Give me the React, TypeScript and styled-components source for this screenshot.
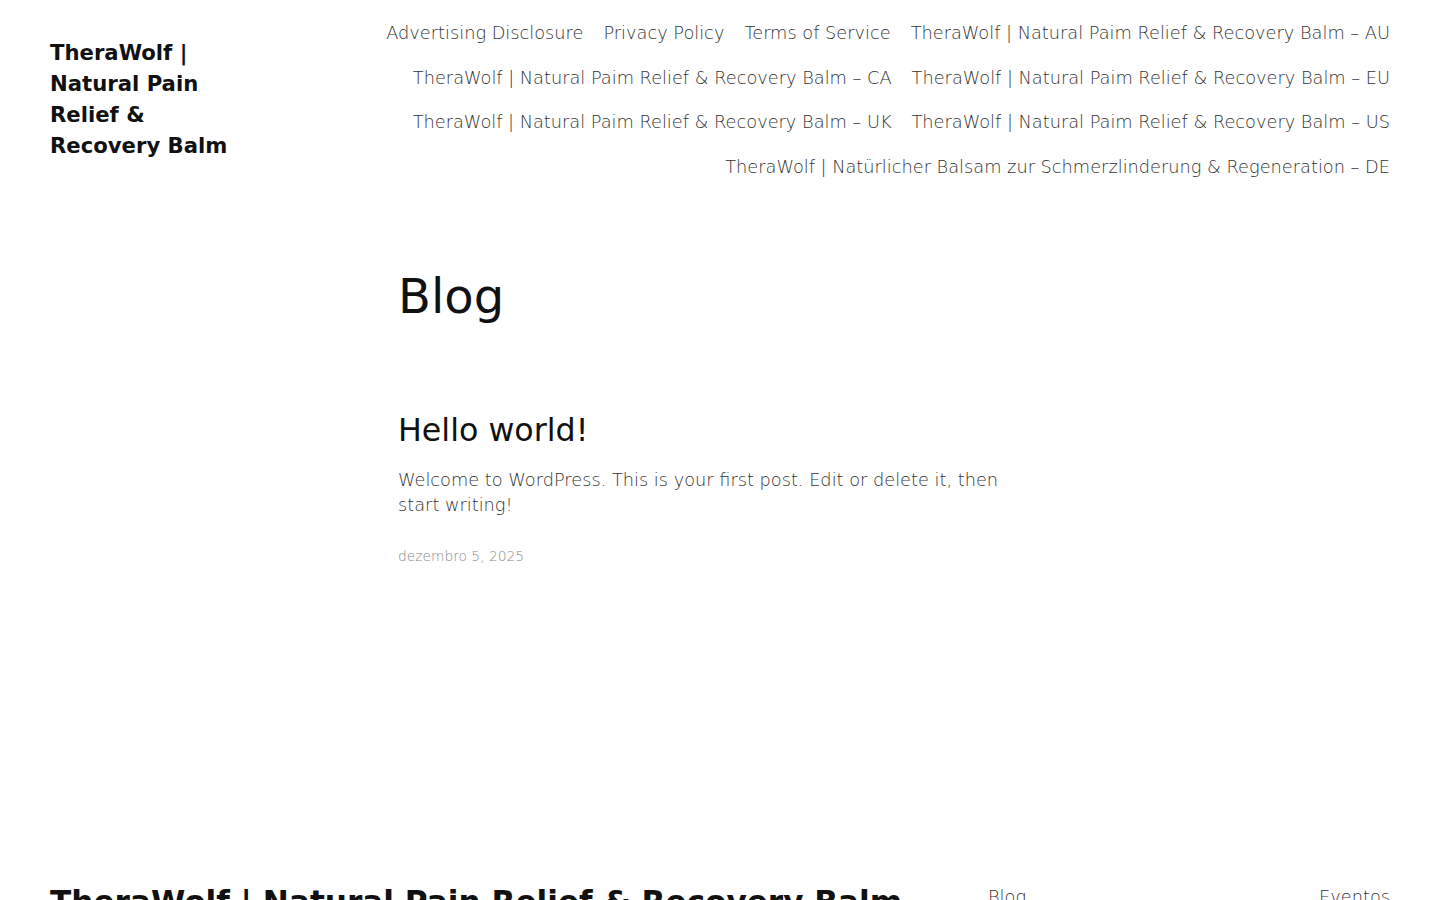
import React from "react";
import styled, { createGlobalStyle } from "styled-components";

const Global = createGlobalStyle`
  html, body { margin: 0; padding: 0; background: #fff; }
  body { font-family: "DejaVu Sans", sans-serif; color: #111; }
  a { text-decoration: none; color: inherit; }
`;

const Page = styled.div`
  min-height: 900px;
  display: flex;
  flex-direction: column;
`;

const Header = styled.header`
  display: flex;
  justify-content: space-between;
  align-items: flex-start;
  padding: 11px 50px 0 50px;
`;

const SiteTitle = styled.h1`
  margin: 26px 0 0 0;
  width: 200px;
  font-size: 21.2px;
  font-weight: 700;
  line-height: 31px;
  color: #111;
`;

const Nav = styled.nav`
  display: flex;
  flex-wrap: wrap;
  justify-content: flex-end;
  column-gap: 20px;
  max-width: 1010px;
`;

const NavLink = styled.a`
  font-size: 17.75px;
  font-weight: 300;
  line-height: 44.5px;
  color: #333;
  white-space: nowrap;
`;

const Main = styled.main`
  padding: 75px 0 0 398px;
  max-width: 620px;
`;

const PageTitle = styled.h2`
  margin: 0;
  font-size: 48px;
  font-weight: 400;
  line-height: 64px;
  color: #111;
`;

const Post = styled.article`
  margin-top: 82px;
`;

const PostTitle = styled.h3`
  margin: 0;
  font-size: 31.7px;
  font-weight: 400;
  line-height: 40px;
  color: #111;
`;

const Excerpt = styled.p`
  margin: 18px 0 0 0;
  font-size: 17.75px;
  font-weight: 300;
  line-height: 25px;
  color: #333;
`;

const PostDate = styled.time`
  display: block;
  margin-top: 30px;
  font-size: 13.8px;
  font-weight: 300;
  color: #8a8a8a;
`;

const Footer = styled.footer`
  margin-top: auto;
  display: flex;
  align-items: flex-start;
  padding: 0 50px;
  height: 16px;
  overflow: hidden;
`;

const FooterTitle = styled.div`
  font-size: 31.15px;
  font-weight: 700;
  color: #111;
  line-height: 36px;
  flex: 1;
`;

const FooterNav = styled.div`
  display: flex;
  justify-content: space-between;
  width: 402px;
  font-size: 17.75px;
  font-weight: 300;
  line-height: 25px;
  color: #333;
  margin-top: 1px;
`;

const navItems = [
  "Advertising Disclosure",
  "Privacy Policy",
  "Terms of Service",
  "TheraWolf | Natural Paim Relief & Recovery Balm – AU",
  "TheraWolf | Natural Paim Relief & Recovery Balm – CA",
  "TheraWolf | Natural Paim Relief & Recovery Balm – EU",
  "TheraWolf | Natural Paim Relief & Recovery Balm – UK",
  "TheraWolf | Natural Paim Relief & Recovery Balm – US",
  "TheraWolf | Natürlicher Balsam zur Schmerzlinderung & Regeneration – DE",
];

export default function App() {
  return (
    <>
      <Global />
      <Page>
        <Header>
          <SiteTitle>TheraWolf | Natural Pain Relief &amp; Recovery Balm</SiteTitle>
          <Nav>
            {navItems.map((n) => (
              <NavLink key={n} href="#">{n}</NavLink>
            ))}
          </Nav>
        </Header>
        <Main>
          <PageTitle>Blog</PageTitle>
          <Post>
            <PostTitle>Hello world!</PostTitle>
            <Excerpt>
              Welcome to WordPress. This is your first post. Edit or delete it, then start writing!
            </Excerpt>
            <PostDate>dezembro 5, 2025</PostDate>
          </Post>
        </Main>
        <Footer>
          <FooterTitle>TheraWolf | Natural Pain Relief &amp; Recovery Balm</FooterTitle>
          <FooterNav>
            <span>Blog</span>
            <span>Eventos</span>
          </FooterNav>
        </Footer>
      </Page>
    </>
  );
}
